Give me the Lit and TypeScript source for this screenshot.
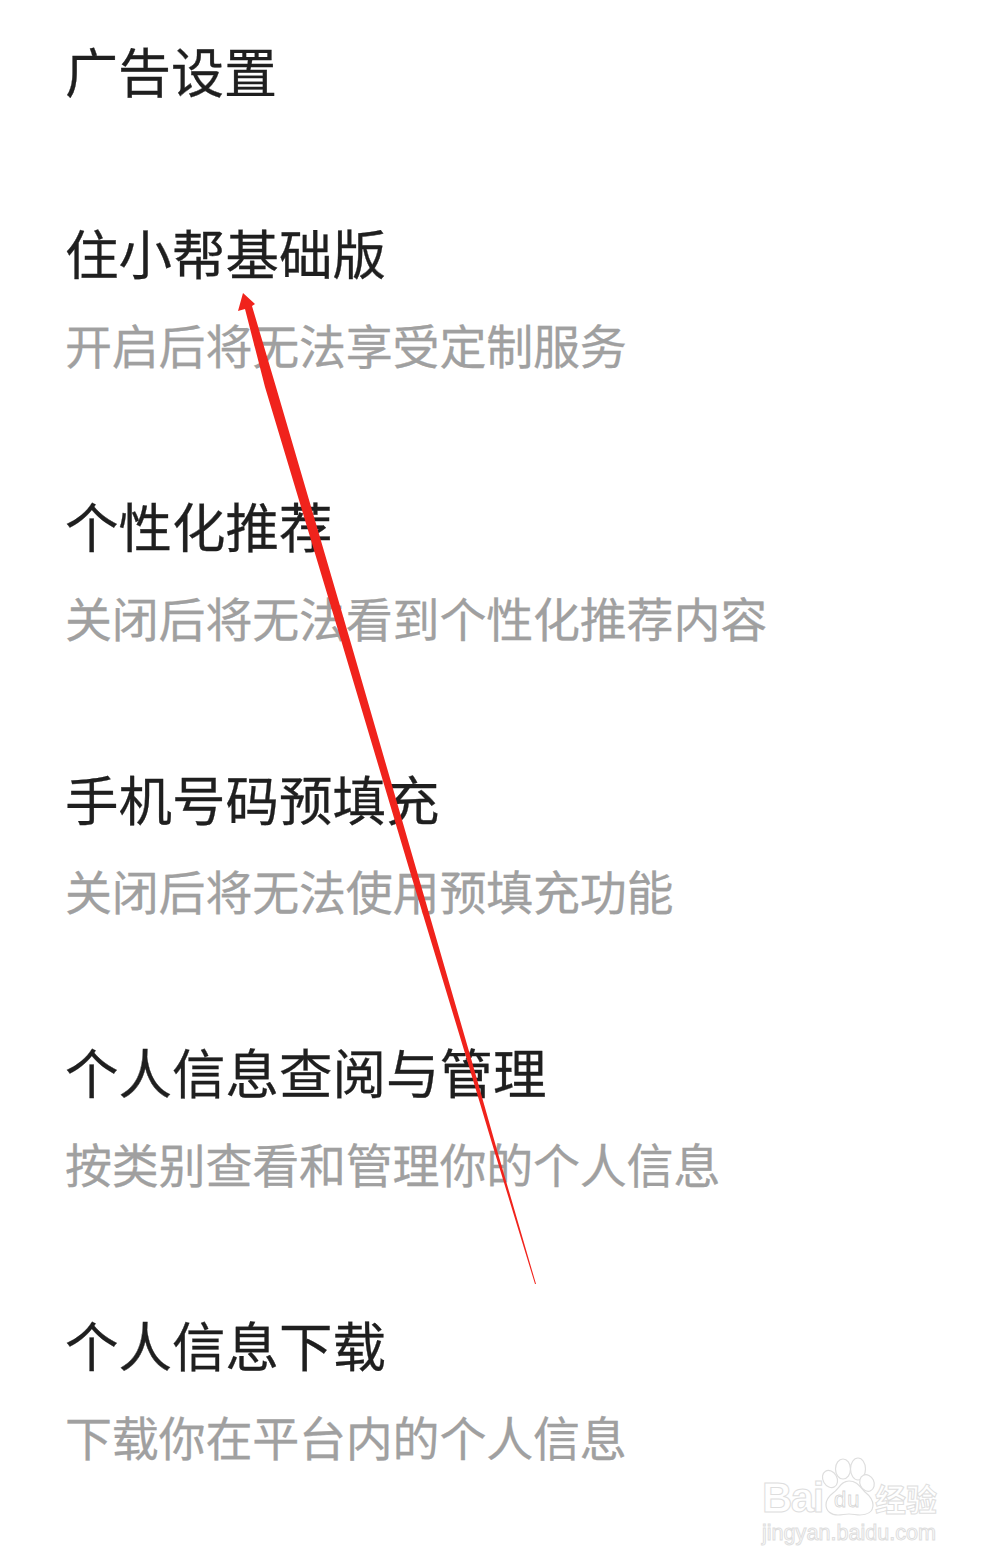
import { LitElement, html, css, svg } from "lit";
import { customElement } from "lit/decorators.js";

const ITEMS = [
  ["住小帮基础版", "开启后将无法享受定制服务"],
  ["个性化推荐", "关闭后将无法看到个性化推荐内容"],
  ["手机号码预填充", "关闭后将无法使用预填充功能"],
  ["个人信息查阅与管理", "按类别查看和管理你的个人信息"],
  ["个人信息下载", "下载你在平台内的个人信息"],
];

@customElement("app-root")
export class AppRoot extends LitElement {
  static styles = css`
    :host {
      display: block;
      position: relative;
      width: 993px;
      height: 1564px;
      overflow: hidden;
      background: #fff;
      font-family: "Noto Sans CJK SC", "Liberation Sans", sans-serif;
    }
    .page {
      display: flex;
      flex-direction: column;
      gap: 121px;
      padding: 40px 0 0 65px;
    }
    .heading {
      font-size: 53px;
      line-height: 60px;
      color: #1f1f1f;
      margin-bottom: 1px;
      -webkit-text-stroke: 0.3px #1f1f1f;
    }
    .item {
      display: flex;
      flex-direction: column;
      gap: 32px;
    }
    .title {
      font-size: 53.5px;
      line-height: 60px;
      color: #1f1f1f;
      -webkit-text-stroke: 0.3px #1f1f1f;
    }
    .sub {
      font-size: 47px;
      letter-spacing: -0.2px;
      line-height: 60px;
      color: #a0a0a0;
      -webkit-text-stroke: 0.3px #a0a0a0;
    }
    .arrow {
      position: absolute;
      left: 0;
      top: 0;
      width: 993px;
      height: 1564px;
      pointer-events: none;
    }
    .mark {
      position: absolute;
      left: 760px;
      top: 1456px;
      width: 200px;
      height: 100px;
    }
    .baidu, .jy, .cn, .du {
      position: absolute;
      color: #fff;
      -webkit-text-stroke: 1px #dedede;
      font-family: "Liberation Sans", sans-serif;
      white-space: nowrap;
    }
    .baidu {
      left: 2px;
      top: 19px;
      font-size: 42px;
      line-height: 46px;
      font-weight: 700;
      letter-spacing: -1.5px;
    }
    .cn {
      left: 115px;
      top: 24px;
      font-size: 31px;
      line-height: 36px;
      font-weight: 700;
      font-family: "Noto Sans CJK SC", sans-serif;
    }
    .jy {
      left: 2px;
      top: 64px;
      font-size: 21.6px;
      line-height: 26px;
    }
    .du {
      left: 74px;
      top: 32px;
      font-size: 22px;
      line-height: 24px;
      letter-spacing: 1px;
      -webkit-text-stroke: 0.8px #d6d6d6;
    }
    .paw {
      position: absolute;
      left: 0;
      top: 0;
      width: 200px;
      height: 100px;
    }
  `;

  render() {
    return html`
      <div class="page">
        <div class="heading">广告设置</div>
        ${ITEMS.map(
          ([t, s]) => html`<div class="item">
            <div class="title">${t}</div>
            <div class="sub">${s}</div>
          </div>`
        )}
      </div>
      <div class="mark">
        <div class="baidu">Bai</div>
        <svg class="paw" viewBox="0 0 200 100">
          ${svg`<g fill="#fff" stroke="#dedede" stroke-width="1.2">
            <ellipse cx="70" cy="23" rx="7" ry="9" transform="rotate(-30 70 23)"/>
            <ellipse cx="83" cy="13" rx="7.5" ry="10"/>
            <ellipse cx="98" cy="13" rx="7.5" ry="11"/>
            <ellipse cx="107" cy="27" rx="7" ry="8.5" transform="rotate(-25 107 27)"/>
            <path d="M89 25c8 0 11 6 16 11 5 4 8 8 8 13 0 7-6 10-13 10-4 0-7-1-11-1s-7 1-11 1c-7 0-12-4-12-10 0-5 3-9 7-12 6-4 8-12 16-12z"/>
          </g>`}
        </svg>
        <div class="du">du</div>
        <div class="cn">经验</div>
        <div class="jy">jingyan.baidu.com</div>
      </div>
      <svg class="arrow" viewBox="0 0 993 1564">
        <path
          d="M243 293 L255 304 L252 306 L276 387 L350 640 L416.5 870 L471.5 1060 L497 1150 L536 1284 L535 1284 L494 1150 L467 1060 L409.5 870 L341 640 L265 387 L245 309 L238 311 Z"
          fill="#f0231c"
        />
      </svg>
    `;
  }
}
